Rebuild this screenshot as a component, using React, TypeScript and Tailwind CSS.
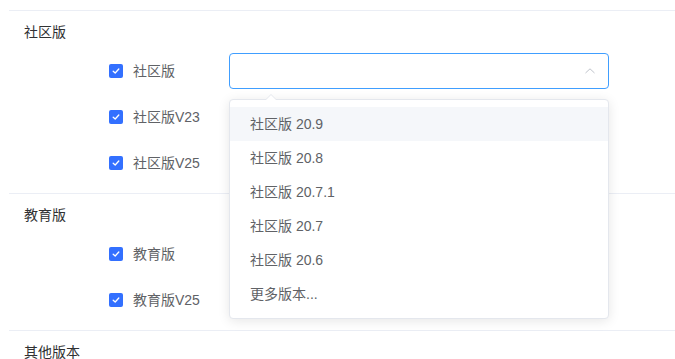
import React from "react";

const FONT = { fontFamily: '"Liberation Sans", "Noto Sans CJK SC", sans-serif' };

const VERSIONS = ["社区版 20.9", "社区版 20.8", "社区版 20.7.1", "社区版 20.7", "社区版 20.6", "更多版本..."];

function Check() {
  return (
    <span className="w-[14px] h-[14px] rounded-[2px] bg-[#3370ff] flex items-center justify-center shrink-0">
      <svg width="10" height="10" viewBox="0 0 10 10">
        <polyline points="2.2,5.2 4.2,7 7.8,3" fill="none" stroke="white" strokeWidth="1.3" strokeLinecap="round" strokeLinejoin="round" />
      </svg>
    </span>
  );
}

function Row({ label, children }: { label: string; children?: React.ReactNode }) {
  return (
    <div className="h-[36px] flex items-center">
      <div className="w-[229px] shrink-0 flex items-center gap-[10px] pl-[109px]">
        <Check />
        <span className="text-[14px] text-[#606266] whitespace-nowrap">{label}</span>
      </div>
      {children}
    </div>
  );
}

function Section({ title, children }: { title: string; children?: React.ReactNode }) {
  return (
    <section className="ml-[9px] border-t border-[#ebeef5] pt-[11px] pb-[12px]">
      <h3 className="pl-[15px] text-[14px] leading-[20px] text-[#303133]">{title}</h3>
      <div className="mt-[11px] -ml-[9px] flex flex-col gap-[10px]">{children}</div>
    </section>
  );
}

function Select() {
  return (
    <div className="relative w-[380px] h-[36px]">
      <div className="w-full h-full border border-[#409eff] rounded-[4px] bg-white flex items-center justify-end pr-[12px]">
        <svg width="12" height="8" viewBox="0 0 12 8">
          <polyline points="1.5,6 6,1.8 10.5,6" fill="none" stroke="#c0c4cc" strokeWidth="1" />
        </svg>
      </div>
      <div className="absolute left-0 top-[46px] w-full z-10 bg-white border border-[#e4e7ed] rounded-[4px] shadow-[0_2px_12px_rgba(0,0,0,0.1)] py-[7px]">
        <div className="absolute -top-[6px] left-[35px] w-0 h-0 border-x-[6px] border-x-transparent border-b-[6px] border-b-[#e4e7ed]" />
        <div className="absolute -top-[5px] left-[35px] w-0 h-0 border-x-[6px] border-x-transparent border-b-[6px] border-b-white" />
        {VERSIONS.map((v, i) => (
          <div
            key={v}
            className={`h-[34px] leading-[34px] px-[20px] text-[14px] text-[#606266] ${i === 0 ? "bg-[#f5f7fa]" : ""}`}
          >
            {v}
          </div>
        ))}
      </div>
    </div>
  );
}

export default function App() {
  return (
    <div className="w-[675px] h-[359px] overflow-hidden bg-white pt-[10px]" style={FONT}>
      <Section title="社区版">
        <Row label="社区版">
          <Select />
        </Row>
        <Row label="社区版V23" />
        <Row label="社区版V25" />
      </Section>
      <Section title="教育版">
        <Row label="教育版" />
        <Row label="教育版V25" />
      </Section>
      <Section title="其他版本" />
    </div>
  );
}
